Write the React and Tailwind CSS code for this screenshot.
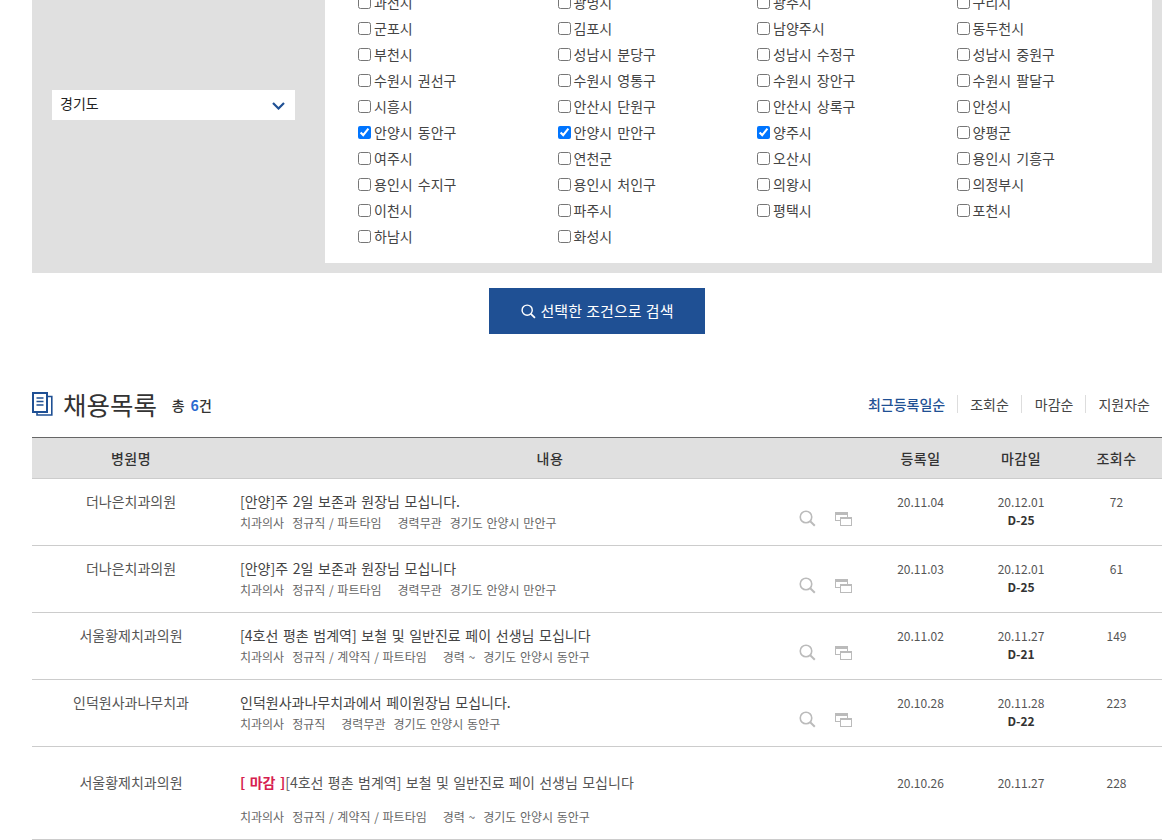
import React from 'react';

const cities = [
  ['가평군', 0], ['고양시 덕양구', 0], ['고양시 일산동구', 0], ['고양시 일산서구', 0],
  ['과천시', 0], ['광명시', 0], ['광주시', 0], ['구리시', 0],
  ['군포시', 0], ['김포시', 0], ['남양주시', 0], ['동두천시', 0],
  ['부천시', 0], ['성남시 분당구', 0], ['성남시 수정구', 0], ['성남시 중원구', 0],
  ['수원시 권선구', 0], ['수원시 영통구', 0], ['수원시 장안구', 0], ['수원시 팔달구', 0],
  ['시흥시', 0], ['안산시 단원구', 0], ['안산시 상록구', 0], ['안성시', 0],
  ['안양시 동안구', 1], ['안양시 만안구', 1], ['양주시', 1], ['양평군', 0],
  ['여주시', 0], ['연천군', 0], ['오산시', 0], ['용인시 기흥구', 0],
  ['용인시 수지구', 0], ['용인시 처인구', 0], ['의왕시', 0], ['의정부시', 0],
  ['이천시', 0], ['파주시', 0], ['평택시', 0], ['포천시', 0],
  ['하남시', 0], ['화성시', 0],
];

const jobs = [
  { name: '더나은치과의원', title: '[안양]주 2일 보존과 원장님 모십니다.', type: '정규직 / 파트타임', exp: '경력무관', area: '경기도 안양시 만안구', reg: '20.11.04', end: '20.12.01', dday: 'D-25', views: 72 },
  { name: '더나은치과의원', title: '[안양]주 2일 보존과 원장님 모십니다', type: '정규직 / 파트타임', exp: '경력무관', area: '경기도 안양시 만안구', reg: '20.11.03', end: '20.12.01', dday: 'D-25', views: 61 },
  { name: '서울황제치과의원', title: '[4호선 평촌 범계역] 보철 및 일반진료 페이 선생님 모십니다', type: '정규직 / 계약직 / 파트타임', exp: '경력 ~', area: '경기도 안양시 동안구', reg: '20.11.02', end: '20.11.27', dday: 'D-21', views: 149 },
  { name: '인덕원사과나무치과', title: '인덕원사과나무치과에서 페이원장님 모십니다.', type: '정규직', exp: '경력무관', area: '경기도 안양시 동안구', reg: '20.10.28', end: '20.11.28', dday: 'D-22', views: 223 },
];

const tableCols = 'grid grid-cols-[198px_640px_101px_100px_91px]';

function SearchIcon({ className }) {
  return (
    <svg className={className} viewBox="0 0 17 17" fill="none" stroke="currentColor" strokeWidth="1.6">
      <circle cx="7" cy="7" r="5.75" />
      <path d="M11.2 11.2 L15.8 15.8" strokeWidth="2" />
    </svg>
  );
}

function WindowIcon() {
  return (
    <svg className="w-[17px] h-[14px] mt-[1px] text-[#bbbbbb]" viewBox="0 0 17 14" fill="none" stroke="currentColor">
      <rect x="0.5" y="0.5" width="12" height="8" />
      <rect x="0" y="0" width="13" height="3" fill="currentColor" stroke="none" />
      <rect x="5.5" y="5.5" width="11" height="8" fill="#ffffff" />
      <rect x="5" y="5" width="12" height="2" fill="currentColor" stroke="none" />
    </svg>
  );
}

function DocIcon() {
  return (
    <svg className="w-[21px] h-[24px] text-[#1f5094]" viewBox="0 0 21 24" fill="none" stroke="currentColor">
      <path d="M1 1 H15 V20 H1 Z" strokeWidth="2" />
      <path d="M15 4.5 H19.8 V23 H5 V20" strokeWidth="1.6" />
      <path d="M4.5 6 H11.5 M4.5 9.5 H11.5 M4.5 13 H11.5" strokeWidth="1.4" />
    </svg>
  );
}

function JobMeta({ job }) {
  return (
    <p className="flex text-[12px] leading-[16px] text-[#666666] [word-spacing:1px]">
      <span className="mr-[8px]">치과의사</span>
      <span className="mr-[16px]">{job.type}</span>
      <span className="mr-[8px]">{job.exp}</span>
      <span>{job.area}</span>
    </p>
  );
}

export default function App() {
  return (
    <div className="h-screen overflow-hidden bg-white text-[#333333] font-['Noto_Sans_CJK_KR','Noto_Sans',sans-serif]">
      <div className="-mt-[63px] pl-[32px] pr-[4px]">
        <section className="flex items-center bg-[#e0e0e0] h-[336px] pl-[20px] pr-[10px]">
          <div className="relative shrink-0 w-[243px] h-[30px] bg-white mr-[30px]">
            <select className="w-full h-full appearance-none bg-transparent pl-[8px] pb-[3px] text-[14px] text-[#222222] outline-none">
              <option>경기도</option>
            </select>
            <svg className="absolute right-[10px] top-[12px] w-[13px] h-[8px] text-[#1f5094]" viewBox="0 0 13 8" fill="none" stroke="currentColor" strokeWidth="2.2">
              <path d="M1 1 L6.5 6.5 L12 1" />
            </svg>
          </div>
          <div className="flex-1 min-w-0 h-[316px] bg-white pt-[16px] pl-[33px]">
            <div className="grid grid-cols-[repeat(4,199.5px)] auto-rows-[26px]">
              {cities.map(([city, checked]) => (
                <label key={city} className="flex items-center text-[14px] text-[#444444] [word-spacing:2px]">
                  <input type="checkbox" defaultChecked={!!checked} className="mr-[3px]" />
                  {city}
                </label>
              ))}
            </div>
          </div>
        </section>

        <div className="flex justify-center mt-[15px]">
          <button className="flex items-center justify-center gap-[5px] w-[216px] h-[46px] bg-[#1f5094] text-white text-[15px] [word-spacing:1px]">
            <SearchIcon className="w-[15px] h-[15px]" />
            선택한 조건으로 검색
          </button>
        </div>

        <div className="flex items-center justify-between h-[40px] mt-[50px] mb-[13px] pr-[12px]">
          <div className="flex items-center">
            <DocIcon />
            <h2 className="ml-[10px] text-[25.5px] leading-none text-[#333333]">채용목록</h2>
            <span className="ml-[15px] mt-[2px] text-[14px] font-medium [word-spacing:2px] tracking-[0.3px]">총 <b className="font-bold text-[#2a6ad0]">6</b>건</span>
          </div>
          <ul className="flex items-center text-[14px] leading-[18px] text-[#444444]">
            <li className="pr-[12px] font-medium text-[#1f5094]">최근등록일순</li>
            <li className="pl-[12px] pr-[12px] border-l border-[#dddddd]">조회순</li>
            <li className="pl-[13px] pr-[12px] border-l border-[#dddddd]">마감순</li>
            <li className="pl-[12px] border-l border-[#dddddd]">지원자순</li>
          </ul>
        </div>

        <div className={`${tableCols} h-[42px] items-center bg-[#e0e0e0] border-t border-t-[#666666] border-b border-b-[#cccccc] text-center text-[14px] tracking-[0.5px] font-medium text-[#333333]`}>
          <div>병원명</div>
          <div>내용</div>
          <div>등록일</div>
          <div>마감일</div>
          <div>조회수</div>
        </div>

        {jobs.map((job) => (
          <div key={job.reg} className={`${tableCols} h-[67px] border-b border-[#cccccc] text-[12px] text-center text-[#555555]`}>
            <div className="pt-[13px] leading-[18px] text-[14px]">{job.name}</div>
            <div className="flex text-left pl-[10px] pt-[12px]">
              <div>
                <p className="text-[14px] leading-[20px] text-[#444444] [word-spacing:1.5px] whitespace-nowrap">{job.title}</p>
                <div className="mt-[4px]"><JobMeta job={job} /></div>
              </div>
              <div className="ml-auto flex items-center gap-[19px] h-[16px] mt-[19px] mr-[18px]">
                <SearchIcon className="w-[17px] h-[17px] text-[#bbbbbb]" />
                <WindowIcon />
              </div>
            </div>
            <div className="pt-[14px] leading-[18px]">{job.reg}</div>
            <div className="pt-[14px] leading-[18px]">
              {job.end}
              <div className="font-bold text-[#333333]">{job.dday}</div>
            </div>
            <div className="pt-[14px] leading-[18px]">{job.views}</div>
          </div>
        ))}

        <div className={`${tableCols} h-[93px] border-b border-[#cccccc] text-[12px] text-center text-[#555555]`}>
          <div className="pt-[26px] leading-[18px] text-[14px]">서울황제치과의원</div>
          <div className="text-left pl-[10px] pt-[25px]">
            <p className="text-[14px] leading-[20px] text-[#555555] [word-spacing:1.25px] whitespace-nowrap">
              <span className="font-bold text-[#d6204e]">[ 마감 ]</span>[4호선 평촌 범계역] 보철 및 일반진료 페이 선생님 모십니다
            </p>
            <div className="mt-[17px]">
              <JobMeta job={{ type: '정규직 / 계약직 / 파트타임', exp: '경력 ~', area: '경기도 안양시 동안구' }} />
            </div>
          </div>
          <div className="pt-[27px] leading-[18px]">20.10.26</div>
          <div className="pt-[27px] leading-[18px]">20.11.27</div>
          <div className="pt-[27px] leading-[18px]">228</div>
        </div>
      </div>
    </div>
  );
}
